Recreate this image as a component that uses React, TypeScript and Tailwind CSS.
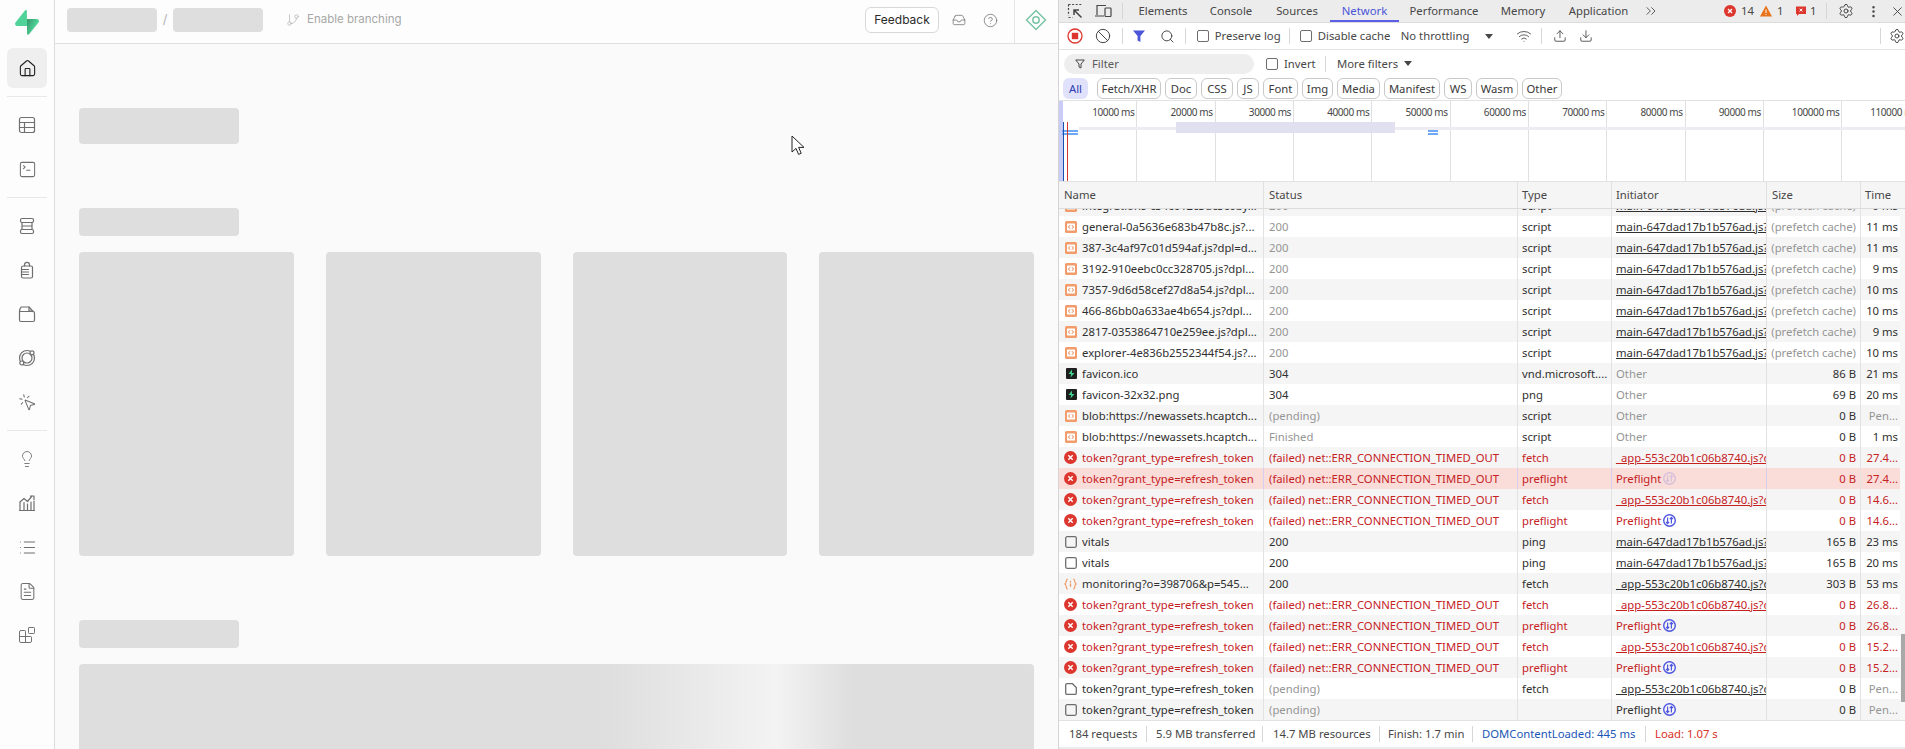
import {
  Ban,
  Blocks,
  ChevronsRight,
  CircleHelp,
  Download,
  EllipsisVertical,
  FileText,
  GitBranch,
  House,
  Inbox,
  Lightbulb,
  List,
  MousePointerClick,
  Search,
  Settings,
  SquareTerminal,
  Upload,
  Wifi,
  X,
} from "lucide-react";
import type { ReactNode } from "react";

type Tone = "muted" | "plain" | "error";
type Kind = "script" | "favicon" | "error" | "box" | "fetch" | "doc";

type Row = {
  kind: Kind;
  name: string;
  status: string;
  statusTone: Tone;
  type: string;
  initiator: string;
  initiatorLink: boolean;
  preflight?: boolean;
  size: string;
  sizeTone: Tone;
  time: string;
  timeTone: Tone;
  error?: boolean;
  selected?: boolean;
};

const mainJs = "main-647dad17b1b576ad.js?d";
const appJs = "_app-553c20b1c06b8740.js?d";

const prefetch = (kind: Kind, name: string, time: string): Row => ({
  kind,
  name,
  status: "200",
  statusTone: "muted",
  type: "script",
  initiator: mainJs,
  initiatorLink: true,
  size: "(prefetch cache)",
  sizeTone: "muted",
  time,
  timeTone: "plain",
});

const failed = (preflight: boolean, time: string, selected = false): Row => ({
  kind: "error",
  name: "token?grant_type=refresh_token",
  status: "(failed) net::ERR_CONNECTION_TIMED_OUT",
  statusTone: "error",
  type: preflight ? "preflight" : "fetch",
  initiator: preflight ? "Preflight" : appJs,
  initiatorLink: !preflight,
  preflight,
  size: "0 B",
  sizeTone: "error",
  time,
  timeTone: "error",
  error: true,
  selected,
});

const rows: Row[] = [
  prefetch("script", "integrations-c34c012c3dc3c0by...", "9 ms"),
  prefetch("script", "general-0a5636e683b47b8c.js?...", "11 ms"),
  prefetch("script", "387-3c4af97c01d594af.js?dpl=d...", "11 ms"),
  prefetch("script", "3192-910eebc0cc328705.js?dpl...", "9 ms"),
  prefetch("script", "7357-9d6d58cef27d8a54.js?dpl...", "10 ms"),
  prefetch("script", "466-86bb0a633ae4b654.js?dpl...", "10 ms"),
  prefetch("script", "2817-0353864710e259ee.js?dpl...", "9 ms"),
  prefetch("script", "explorer-4e836b2552344f54.js?...", "10 ms"),
  { kind: "favicon", name: "favicon.ico", status: "304", statusTone: "plain", type: "vnd.microsoft....", initiator: "Other", initiatorLink: false, size: "86 B", sizeTone: "plain", time: "21 ms", timeTone: "plain" },
  { kind: "favicon", name: "favicon-32x32.png", status: "304", statusTone: "plain", type: "png", initiator: "Other", initiatorLink: false, size: "69 B", sizeTone: "plain", time: "20 ms", timeTone: "plain" },
  { kind: "script", name: "blob:https://newassets.hcaptch...", status: "(pending)", statusTone: "muted", type: "script", initiator: "Other", initiatorLink: false, size: "0 B", sizeTone: "plain", time: "Pen...", timeTone: "muted" },
  { kind: "script", name: "blob:https://newassets.hcaptch...", status: "Finished", statusTone: "muted", type: "script", initiator: "Other", initiatorLink: false, size: "0 B", sizeTone: "plain", time: "1 ms", timeTone: "plain" },
  failed(false, "27.4..."),
  failed(true, "27.4...", true),
  failed(false, "14.6..."),
  failed(true, "14.6..."),
  { kind: "box", name: "vitals", status: "200", statusTone: "plain", type: "ping", initiator: mainJs, initiatorLink: true, size: "165 B", sizeTone: "plain", time: "23 ms", timeTone: "plain" },
  { kind: "box", name: "vitals", status: "200", statusTone: "plain", type: "ping", initiator: mainJs, initiatorLink: true, size: "165 B", sizeTone: "plain", time: "20 ms", timeTone: "plain" },
  { kind: "fetch", name: "monitoring?o=398706&p=545...", status: "200", statusTone: "plain", type: "fetch", initiator: appJs, initiatorLink: true, size: "303 B", sizeTone: "plain", time: "53 ms", timeTone: "plain" },
  failed(false, "26.8..."),
  failed(true, "26.8..."),
  failed(false, "15.2..."),
  failed(true, "15.2..."),
  { kind: "doc", name: "token?grant_type=refresh_token", status: "(pending)", statusTone: "muted", type: "fetch", initiator: appJs, initiatorLink: true, size: "0 B", sizeTone: "plain", time: "Pen...", timeTone: "muted" },
  { kind: "box", name: "token?grant_type=refresh_token", status: "(pending)", statusTone: "muted", type: "", initiator: "Preflight", initiatorLink: false, preflight: true, size: "0 B", sizeTone: "plain", time: "Pen...", timeTone: "muted" },
];

const toneClass: Record<Tone, string> = {
  muted: "text-[#959595]",
  plain: "text-[#303030]",
  error: "text-[#c5221f]",
};

const tabs = [
  { label: "Elements", width: "w-[70px]" },
  { label: "Console", width: "w-[66px]" },
  { label: "Sources", width: "w-[66px]" },
  { label: "Network", width: "w-[69px]" },
  { label: "Performance", width: "w-[90px]" },
  { label: "Memory", width: "w-[68px]" },
  { label: "Application", width: "w-[83px]" },
];

const chips = [
  { label: "Fetch/XHR", width: "w-[64px]" },
  { label: "Doc", width: "w-[32px]" },
  { label: "CSS", width: "w-[32px]" },
  { label: "JS", width: "w-[22px]" },
  { label: "Font", width: "w-[35px]" },
  { label: "Img", width: "w-[31px]" },
  { label: "Media", width: "w-[43px]" },
  { label: "Manifest", width: "w-[56px]" },
  { label: "WS", width: "w-[28px]" },
  { label: "Wasm", width: "w-[42px]" },
  { label: "Other", width: "w-[40px]" },
];

const scale = [10000, 20000, 30000, 40000, 50000, 60000, 70000, 80000, 90000, 100000, 110000];

const Logo = () => (
  <svg width="24" height="25" viewBox="0 0 109 113" fill="none">
    <path
      d="M63.7076 110.284C60.8481 113.885 55.0502 111.912 54.9813 107.314L53.9738 40.0627L99.1935 40.0627C107.384 40.0627 111.952 49.5228 106.859 55.9374L63.7076 110.284Z"
      fill="url(#logoFade)"
    />
    <path
      d="M45.317 2.07103C48.1765 -1.53037 53.9745 0.442937 54.0434 5.041L54.4849 72.2922H9.83113C1.64038 72.2922 -2.92775 62.8321 2.1655 56.4175L45.317 2.07103Z"
      fill="#3ECF8E"
    />
    <defs>
      <linearGradient id="logoFade" x1="53.97" y1="54.97" x2="94.16" y2="71.83" gradientUnits="userSpaceOnUse">
        <stop stopColor="#249361" />
        <stop offset="1" stopColor="#3ECF8E" />
      </linearGradient>
    </defs>
  </svg>
);

const NavSvg = ({ children }: { children: ReactNode }) => (
  <svg width="18" height="18" viewBox="0 0 18 18" fill="none" stroke="#6f6f6f" strokeWidth="1.2" strokeLinecap="round" strokeLinejoin="round">
    {children}
  </svg>
);

const TableIcon = () => (
  <NavSvg>
    <rect x="1.5" y="1.5" width="15" height="15" rx="2" />
    <path d="M1.5 6.5h15M1.5 11.5h15M6.5 6.5v10" />
  </NavSvg>
);

const DatabaseIcon = () => (
  <NavSvg>
    <rect x="2.5" y="1.5" width="13" height="4" rx="1.5" />
    <rect x="2.5" y="12.5" width="13" height="4" rx="1.5" />
    <path d="M4 5.5v7M14 5.5v7M4 9h10" />
  </NavSvg>
);

const AuthIcon = () => (
  <NavSvg>
    <path d="M6.5 5V3.8a2.5 2.5 0 0 1 5 0V5" />
    <rect x="3.5" y="5" width="11" height="12" rx="1.5" />
    <path d="M3.5 8.5h7M3.5 11h7M3.5 13.5h7" />
  </NavSvg>
);

const StorageIcon = () => (
  <NavSvg>
    <path d="M1.5 6V15a1.5 1.5 0 0 0 1.5 1.5h12a1.5 1.5 0 0 0 1.5-1.5V8a1.5 1.5 0 0 0-1.5-1.5H3A1.5 1.5 0 0 1 1.5 5l1-2A1.5 1.5 0 0 1 4 2h7l4 4.5" />
    <path d="M11 2v4h4" />
  </NavSvg>
);

const RealtimeIcon = () => (
  <NavSvg>
    <circle cx="9" cy="9" r="7.5" />
    <circle cx="9" cy="9" r="5" />
    <circle cx="14" cy="3.8" r="2" fill="#fdfdfd" />
    <circle cx="3.8" cy="14" r="2" fill="#fdfdfd" />
  </NavSvg>
);

const ReportsIcon = () => (
  <NavSvg>
    <path d="M1.5 16.5h15M2 16.5V8l4-3.5 3.5 3 4.5-5.5M16 2h-3.5M16 2v3.5" />
    <path d="M6 16.5V8.5M9.5 16.5V10M13 16.5V8M16 16.5V7" />
  </NavSvg>
);

const navTop = [<TableIcon key="t" />, <SquareTerminal key="s" size={19} strokeWidth={1.3} color="#6f6f6f" />];
const navMiddle = [
  <DatabaseIcon key="d" />,
  <AuthIcon key="a" />,
  <StorageIcon key="f" />,
  <RealtimeIcon key="r" />,
  <MousePointerClick key="m" size={19} strokeWidth={1.3} color="#6f6f6f" />,
];
const navBottom = [
  <Lightbulb key="b" size={18} strokeWidth={1.2} color="#6f6f6f" />,
  <ReportsIcon key="c" />,
  <List key="l" size={19} strokeWidth={1.3} color="#6f6f6f" />,
  <FileText key="x" size={19} strokeWidth={1.3} color="#6f6f6f" />,
  <Blocks key="e" size={18} strokeWidth={1.3} color="#6f6f6f" />,
];

const NavDivider = () => <div className="mx-[7px] my-[6px] h-px bg-[#e8e8e8]" />;

const NavGroup = ({ items }: { items: ReactNode[] }) => (
  <div className="flex flex-col">
    {items.map((item, i) => (
      <div key={i} className="flex h-[44px] items-center justify-center">
        {item}
      </div>
    ))}
  </div>
);

const Sidebar = () => (
  <aside className="w-[55px] shrink-0 border-r border-[#dcdcdc] bg-[#fdfdfd]">
    <div className="flex h-[44px] items-center justify-center opacity-90">
      <Logo />
    </div>
    <div className="mx-[7px] mt-1 flex h-[40px] w-[40px] items-center justify-center rounded-md bg-[#efefef]">
      <House size={19} strokeWidth={1.4} color="#222222" />
    </div>
    <div className="mx-[7px] mt-2 mb-[6px] h-px bg-[#e8e8e8]" />
    <NavGroup items={navTop} />
    <NavDivider />
    <NavGroup items={navMiddle} />
    <NavDivider />
    <NavGroup items={navBottom} />
  </aside>
);

const Skeleton = ({ className }: { className: string }) => <div className={`rounded bg-[#dedede] ${className}`} />;

const Dashboard = () => (
  <div className="relative flex min-w-0 flex-1 flex-col bg-[#fafafa] font-['Inter',sans-serif]">
    <header className="flex h-[44px] shrink-0 items-center border-b border-[#e0e0e0] bg-[#fdfdfd] pb-[3px] pl-[12px]">
      <Skeleton className="h-6 w-[90px]" />
      <span className="mx-[5px] w-[6px] text-center text-[13px] text-[#b5b5b5]">/</span>
      <Skeleton className="h-6 w-[90px]" />
      <GitBranch size={14} strokeWidth={1.2} color="#b0b0b0" className="ml-[23px]" />
      <span className="ml-[7px] w-[96px] text-[11.5px] whitespace-nowrap text-[#a8a8a8]">Enable branching</span>
      <div className="ml-[462px] flex h-[26px] w-[74px] items-center justify-center rounded-md border border-[#d8d8d8] bg-white text-[12px] text-[#2a2a2a]">
        Feedback
      </div>
      <Inbox size={14} strokeWidth={1.3} color="#6f6f6f" className="ml-[13px]" />
      <CircleHelp size={15} strokeWidth={1.2} color="#6f6f6f" className="ml-[17px]" />
      <div className="-mb-[3px] ml-[16px] h-[43px] w-px bg-[#e4e4e4]" />
      <svg width="22" height="22" viewBox="0 0 22 22" fill="none" stroke="#7cc4a6" strokeWidth="1.5" className="ml-[10px]">
        <path d="M11 1.5 20.5 11 11 20.5 1.5 11Z" />
        <circle cx="11" cy="11" r="3.2" />
      </svg>
    </header>

    <main className="flex min-h-0 flex-1 flex-col overflow-hidden px-6 pt-[64px]">
      <Skeleton className="h-9 w-[160px] shrink-0" />
      <Skeleton className="mt-16 h-7 w-[160px] shrink-0" />
      <div className="mt-4 grid shrink-0 grid-cols-4 gap-8">
        {[0, 1, 2, 3].map((i) => (
          <Skeleton key={i} className="h-[304px]" />
        ))}
      </div>
      <Skeleton className="mt-16 h-7 w-[160px] shrink-0" />
      <div className="mt-4 h-[304px] shrink-0 rounded bg-[linear-gradient(90deg,#dedede_55%,#f3f3f3_73%,#dedede_81%)]" />
    </main>

    <svg width="14" height="21" viewBox="0 0 14 21" className="absolute top-[135px] left-[736px]">
      <path d="M1 1v16l4-3.6 2.6 6 2.6-1.1-2.6-5.9H13Z" fill="#fff" stroke="#222" strokeWidth="1" strokeLinejoin="round" />
    </svg>
  </div>
);

const Sep = ({ className = "" }: { className?: string }) => <div className={`h-4 w-px shrink-0 bg-[#d6d6d6] ${className}`} />;

const Check = ({ className = "" }: { className?: string }) => (
  <span className={`h-3 w-3 shrink-0 rounded-[2px] border border-[#6e6e6e] bg-white ${className}`} />
);

const IconCell = ({ children }: { children: ReactNode }) => (
  <div className="flex h-full w-[28px] shrink-0 items-center justify-center">{children}</div>
);

const TabBar = () => (
  <div className="flex h-[23px] shrink-0 items-center border-b border-[#dcdcdc] bg-[#ececec] pl-[2px]">
    <IconCell>
      <svg width="16" height="16" viewBox="0 0 16 16" fill="none" stroke="#474747" strokeWidth="1.2">
        <path d="M1.5 1.5h13M1.5 1.5v11M1.5 14.5h4" strokeDasharray="2 1.6" />
        <path d="M14.5 14.5 7 7M7 12V7h5" strokeWidth="1.5" />
      </svg>
    </IconCell>
    <IconCell>
      <svg width="18" height="16" viewBox="0 0 18 16" fill="none" stroke="#474747" strokeWidth="1.2">
        <path d="M3 12V2.5h9M1 13h9" />
        <rect x="11" y="5" width="6" height="8.5" rx="0.8" />
      </svg>
    </IconCell>
    <Sep className="ml-[5px]" />
    <div className="ml-[5px] flex h-full">
      {tabs.map((t) => (
        <div
          key={t.label}
          className={`flex h-full items-center justify-center ${t.width} ${
            t.label === "Network" ? "border-b-2 border-[#5b5fe6] pt-[2px] text-[#4a55d8]" : "text-[#474747]"
          }`}
        >
          {t.label}
        </div>
      ))}
    </div>
    <ChevronsRight size={16} strokeWidth={1.3} color="#474747" className="ml-[3px]" />
    <svg width="12" height="12" viewBox="0 0 12 12" className="ml-[65px]">
      <circle cx="6" cy="6" r="6" fill="#dc362e" />
      <path d="M4 4l4 4M8 4 4 8" stroke="#fff" strokeWidth="1.3" />
    </svg>
    <span className="ml-[5px] w-[13px] text-[#474747]">14</span>
    <svg width="12" height="12" viewBox="0 0 12 12" className="ml-[6px]">
      <path d="M6 .5 12 11.5H0Z" fill="#e8711a" />
      <path d="M6 4.5v3.5M6 9v1" stroke="#fff" strokeWidth="1" />
    </svg>
    <span className="ml-[5px] w-[8px] text-[#474747]">1</span>
    <svg width="12" height="12" viewBox="0 0 12 12" className="ml-[10px]">
      <path d="M1 1.5h10v7.5H4L2 11V9H1Z" fill="#dc362e" />
      <path d="M4.6 3.7l2.8 2.8M7.4 3.7 4.6 6.5" stroke="#fff" strokeWidth="1" />
    </svg>
    <span className="ml-[3px] w-[8px] text-[#474747]">1</span>
    <Sep className="ml-[8px]" />
    <Settings size={16} strokeWidth={1.5} color="#474747" className="ml-[11px]" />
    <EllipsisVertical size={15} strokeWidth={2} color="#474747" className="ml-[12px]" />
    <X size={15} strokeWidth={1.5} color="#474747" className="ml-[9px]" />
  </div>
);

const NetworkToolbar = () => (
  <div className="flex h-[27px] shrink-0 items-center border-b border-[#e2e2e2] pl-[2px]">
    <IconCell>
      <svg width="16" height="16" viewBox="0 0 16 16">
        <circle cx="8" cy="8" r="7" fill="none" stroke="#dc362e" strokeWidth="1.3" />
        <rect x="4.8" y="4.8" width="6.4" height="6.4" fill="#dc362e" />
      </svg>
    </IconCell>
    <IconCell>
      <Ban size={16} strokeWidth={1.5} color="#474747" />
    </IconCell>
    <Sep className="ml-[5px]" />
    <div className="ml-[3px] flex w-[27px] justify-center">
      <svg width="14" height="14" viewBox="0 0 14 14">
        <path d="M1 1.5h12L8.4 7v6L5.6 11.5V7Z" fill="#4a55d8" />
      </svg>
    </div>
    <Search size={15} strokeWidth={1.6} color="#474747" className="ml-[7px]" />
    <Sep className="ml-[10px]" />
    <Check className="ml-[11px]" />
    <span className="ml-[6px] w-[64px] whitespace-nowrap">Preserve log</span>
    <Sep className="ml-[10px]" />
    <Check className="ml-[10px]" />
    <span className="ml-[6px] w-[72px] whitespace-nowrap">Disable cache</span>
    <span className="ml-[11px] w-[70px] whitespace-nowrap">No throttling</span>
    <svg width="8" height="5" viewBox="0 0 8 5" className="ml-[15px]">
      <path d="M0 0h8L4 5Z" fill="#474747" />
    </svg>
    <Wifi size={16} strokeWidth={1.3} color="#474747" className="ml-[23px]" />
    <Sep className="ml-[9px]" />
    <Upload size={14} strokeWidth={1.5} color="#474747" className="ml-[11px]" />
    <Download size={14} strokeWidth={1.5} color="#474747" className="ml-[12px]" />
    <Sep className="ml-[287px]" />
    <Settings size={16} strokeWidth={1.5} color="#474747" className="ml-[8px]" />
  </div>
);

const FilterRow = () => (
  <div className="flex h-[27px] shrink-0 items-center pl-[5px]">
    <div className="flex h-5 w-[190px] items-center rounded-full bg-[#eeeeee] pl-[11px] text-[#5a5a5a]">
      <svg width="10" height="10" viewBox="0 0 10 10" fill="none" stroke="#474747" strokeWidth="1">
        <path d="M.7 1h8.6L6 5v4L4 8V5Z" />
      </svg>
      <span className="ml-[7px]">Filter</span>
    </div>
    <Check className="ml-[12px]" />
    <span className="ml-[6px] w-[30px]">Invert</span>
    <Sep className="ml-[11px]" />
    <span className="ml-[11px] w-[60px] whitespace-nowrap">More filters</span>
    <svg width="8" height="5" viewBox="0 0 8 5" className="ml-[7px]">
      <path d="M0 0h8L4 5Z" fill="#474747" />
    </svg>
  </div>
);

const ChipRow = () => (
  <div className="flex h-[24px] shrink-0 items-center border-b border-[#e2e2e2] pl-[4px]">
    <div className="flex h-[21px] w-[25px] items-center justify-center rounded-md bg-[#e0e2fb] text-[#2f3cb0]">All</div>
    <div className="ml-[9px] flex gap-[4px]">
      {chips.map((c) => (
        <div
          key={c.label}
          className={`flex h-[21px] items-center justify-center rounded-md border border-[#c9c9c9] text-[#3a3a3a] ${c.width}`}
        >
          {c.label}
        </div>
      ))}
    </div>
  </div>
);

const Timeline = () => (
  <div className="relative h-[81px] shrink-0 overflow-hidden border-b border-[#e2e2e2] text-[10px] tracking-[-0.4px] text-[#474747]">
    <div className="flex h-full">
      {scale.map((v) => (
        <div key={v} className="h-full w-[78.33px] shrink-0 border-r border-[#e0e0e0] pt-[3px] pr-[2px] text-right whitespace-nowrap">
          {v} ms
        </div>
      ))}
    </div>
    <svg width="846" height="81" className="absolute top-0 left-0">
      <rect x="0" y="0" width="4" height="81" fill="#c9ccf6" />
      <rect x="20" y="26" width="826" height="3" fill="#ececf2" />
      <rect x="117" y="21" width="219" height="11" fill="#e0e0f1" />
      <rect x="3" y="29" width="16" height="2" fill="#6ea8f7" />
      <rect x="3" y="32" width="16" height="2" fill="#6ea8f7" />
      <rect x="369" y="29" width="10" height="2" fill="#6ea8f7" />
      <rect x="369" y="32" width="10" height="2" fill="#6ea8f7" />
      <rect x="4" y="21" width="1" height="60" fill="#1a4fae" />
      <rect x="8" y="21" width="1" height="60" fill="#d0392b" />
    </svg>
  </div>
);

const ScriptIcon = () => (
  <svg width="12" height="12" viewBox="0 0 12 12">
    <rect width="12" height="12" rx="1.5" fill="#f29c6b" />
    <rect x="2" y="2.5" width="8" height="7" rx="0.5" fill="#fff" />
    <path d="M5 4.2 3.5 6 5 7.8M7 4.2 8.5 6 7 7.8" fill="none" stroke="#e9824a" strokeWidth="1" />
  </svg>
);

const FaviconIcon = () => (
  <svg width="11" height="11" viewBox="0 0 11 11">
    <rect width="11" height="11" rx="1" fill="#1e1e1e" />
    <path d="M6 1.5 2.5 6H5L4.6 9.5 8.5 5H6Z" fill="#3ecf8e" />
  </svg>
);

const ErrorIcon = () => (
  <svg width="13" height="13" viewBox="0 0 13 13" className="-ml-px">
    <circle cx="6.5" cy="6.5" r="6.5" fill="#dc362e" />
    <path d="M4.3 4.3l4.4 4.4M8.7 4.3 4.3 8.7" stroke="#fff" strokeWidth="1.4" />
  </svg>
);

const BoxIcon = () => (
  <svg width="12" height="12" viewBox="0 0 12 12" fill="none" stroke="#6e6e6e" strokeWidth="1.3">
    <rect x="0.7" y="0.7" width="10.6" height="10.6" rx="1.5" />
  </svg>
);

const DocIcon = () => (
  <svg width="12" height="12" viewBox="0 0 12 12" fill="none" stroke="#6e6e6e" strokeWidth="1.3">
    <path d="M.7 2A1.3 1.3 0 0 1 2 .7h5.5l3.8 3.8V10A1.3 1.3 0 0 1 10 11.3H2A1.3 1.3 0 0 1 .7 10Z" />
  </svg>
);

const FetchIcon = () => (
  <svg width="13" height="12" viewBox="0 0 13 12" fill="none" stroke="#ee9a66" strokeWidth="1.2" strokeLinecap="round" className="-ml-px">
    <path d="M3.5 1C1.8 1 2.8 5 1 6c1.8 1 .8 5 2.5 5M9.5 1c1.7 0 .7 4 2.5 5-1.8 1-.8 5-2.5 5" />
    <path d="M6.5 3.5v.6M6.5 6v2.2" strokeWidth="1.4" />
  </svg>
);

const PreflightIcon = ({ faint }: { faint?: boolean }) => (
  <svg width="13" height="13" viewBox="0 0 13 13" className={`ml-[2px] shrink-0 ${faint ? "opacity-20" : ""}`} fill="none" stroke="#4f56e0" strokeWidth="1.2">
    <circle cx="6.5" cy="6.5" r="5.8" strokeWidth="1.4" />
    <path d="M4.6 3.5v6M3 7.8l1.6 1.7 1.6-1.7M8.4 9.5v-6M6.8 5.2l1.6-1.7L10 5.2" />
  </svg>
);

const rowIcon: Record<Kind, ReactNode> = {
  script: <ScriptIcon />,
  favicon: <FaviconIcon />,
  error: <ErrorIcon />,
  box: <BoxIcon />,
  fetch: <FetchIcon />,
  doc: <DocIcon />,
};

const cellLine = "flex h-full shrink-0 items-center overflow-hidden whitespace-nowrap border-r";

const TableRow = ({ row, index }: { row: Row; index: number }) => {
  const border = row.selected ? "border-[#d6cff0]" : "border-[#e2e2e2]";
  const bg = row.selected ? "bg-[#fadcd9]" : index % 2 === 0 ? "bg-[#f5f5f5]" : "bg-white";
  const main = row.error ? toneClass.error : toneClass.plain;
  return (
    <div className={`flex h-[21px] ${bg}`}>
      <div className={`${cellLine} ${border} w-[205px] pl-[6px] ${main}`}>
        <span className="flex w-[12px] shrink-0 items-center justify-center">{rowIcon[row.kind]}</span>
        <span className="ml-[5px] truncate">{row.name}</span>
      </div>
      <div className={`${cellLine} ${border} w-[254px] pl-[5px] ${toneClass[row.statusTone]}`}>{row.status}</div>
      <div className={`${cellLine} ${border} w-[94px] pl-[4px] ${main}`}>{row.type}</div>
      <div className={`${cellLine} ${border} w-[155px] pl-[4px] ${row.initiatorLink || row.preflight ? main : toneClass.muted}`}>
        <span className={row.initiatorLink ? "underline" : ""}>{row.initiator}</span>
        {row.preflight && <PreflightIcon faint={row.selected} />}
      </div>
      <div className={`${cellLine} w-[94px] justify-end pr-[4px] border-[#e2e2e2] ${toneClass[row.sizeTone]}`}>{row.size}</div>
      <div className={`flex h-full w-[39px] shrink-0 items-center justify-end overflow-hidden pr-[2px] whitespace-nowrap ${toneClass[row.timeTone]}`}>
        {row.time}
      </div>
    </div>
  );
};

const TableHeader = () => (
  <div className="relative z-10 flex h-[27px] shrink-0 border-b border-[#dcdcdc] bg-[#f5f5f5] pr-[5px] text-[#474747]">
    <div className="flex w-[205px] items-center border-r border-[#e0e0e0] pl-[5px]">Name</div>
    <div className="flex w-[254px] items-center border-r border-[#e0e0e0] pl-[5px]">Status</div>
    <div className="flex w-[94px] items-center border-r border-[#e0e0e0] pl-[4px]">Type</div>
    <div className="flex w-[155px] items-center border-r border-[#e0e0e0] pl-[4px]">Initiator</div>
    <div className="flex w-[94px] items-center border-r border-[#e0e0e0] pl-[5px]">Size</div>
    <div className="flex w-[39px] items-center pl-[4px]">Time</div>
  </div>
);

const Footer = () => (
  <div className="flex h-[27px] shrink-0 items-center border-t border-[#e2e2e2] pl-[10px] text-[#474747]">
    <span className="w-[67px] whitespace-nowrap">184 requests</span>
    <Sep className="ml-[10px]" />
    <span className="ml-[9px] w-[97px] whitespace-nowrap">5.9 MB transferred</span>
    <Sep className="ml-[9px]" />
    <span className="ml-[10px] w-[96px] whitespace-nowrap">14.7 MB resources</span>
    <Sep className="ml-[10px]" />
    <span className="ml-[8px] w-[75px] whitespace-nowrap">Finish: 1.7 min</span>
    <Sep className="ml-[9px]" />
    <span className="ml-[9px] w-[154px] whitespace-nowrap text-[#1a56b5]">DOMContentLoaded: 445 ms</span>
    <Sep className="ml-[9px]" />
    <span className="ml-[9px] whitespace-nowrap text-[#d93025]">Load: 1.07 s</span>
  </div>
);

const DevTools = () => (
  <section className="flex w-[847px] shrink-0 flex-col border-l border-[#d4d4d4] bg-white font-['Noto_Sans',sans-serif] text-[11.3px] leading-[16px] text-[#474747]">
    <TabBar />
    <NetworkToolbar />
    <FilterRow />
    <ChipRow />
    <Timeline />
    <TableHeader />
    <div className="flex h-[511px] shrink-0 overflow-hidden">
      <div className="-mt-[14px] w-[841px] shrink-0">
        {rows.map((row, i) => (
          <TableRow key={i} row={row} index={i} />
        ))}
      </div>
      <div className="w-[5px] shrink-0 bg-[#f7f7f7] pl-px">
        <div className="mt-[425px] h-[68px] w-[4px] bg-[#a8a8a8]" />
      </div>
    </div>
    <Footer />
    <div className="h-[3px] shrink-0 bg-[#ececec]" />
  </section>
);

export default function App() {
  return (
    <div className="flex h-[749px] w-[1905px] overflow-hidden bg-white">
      <Sidebar />
      <Dashboard />
      <DevTools />
    </div>
  );
}
